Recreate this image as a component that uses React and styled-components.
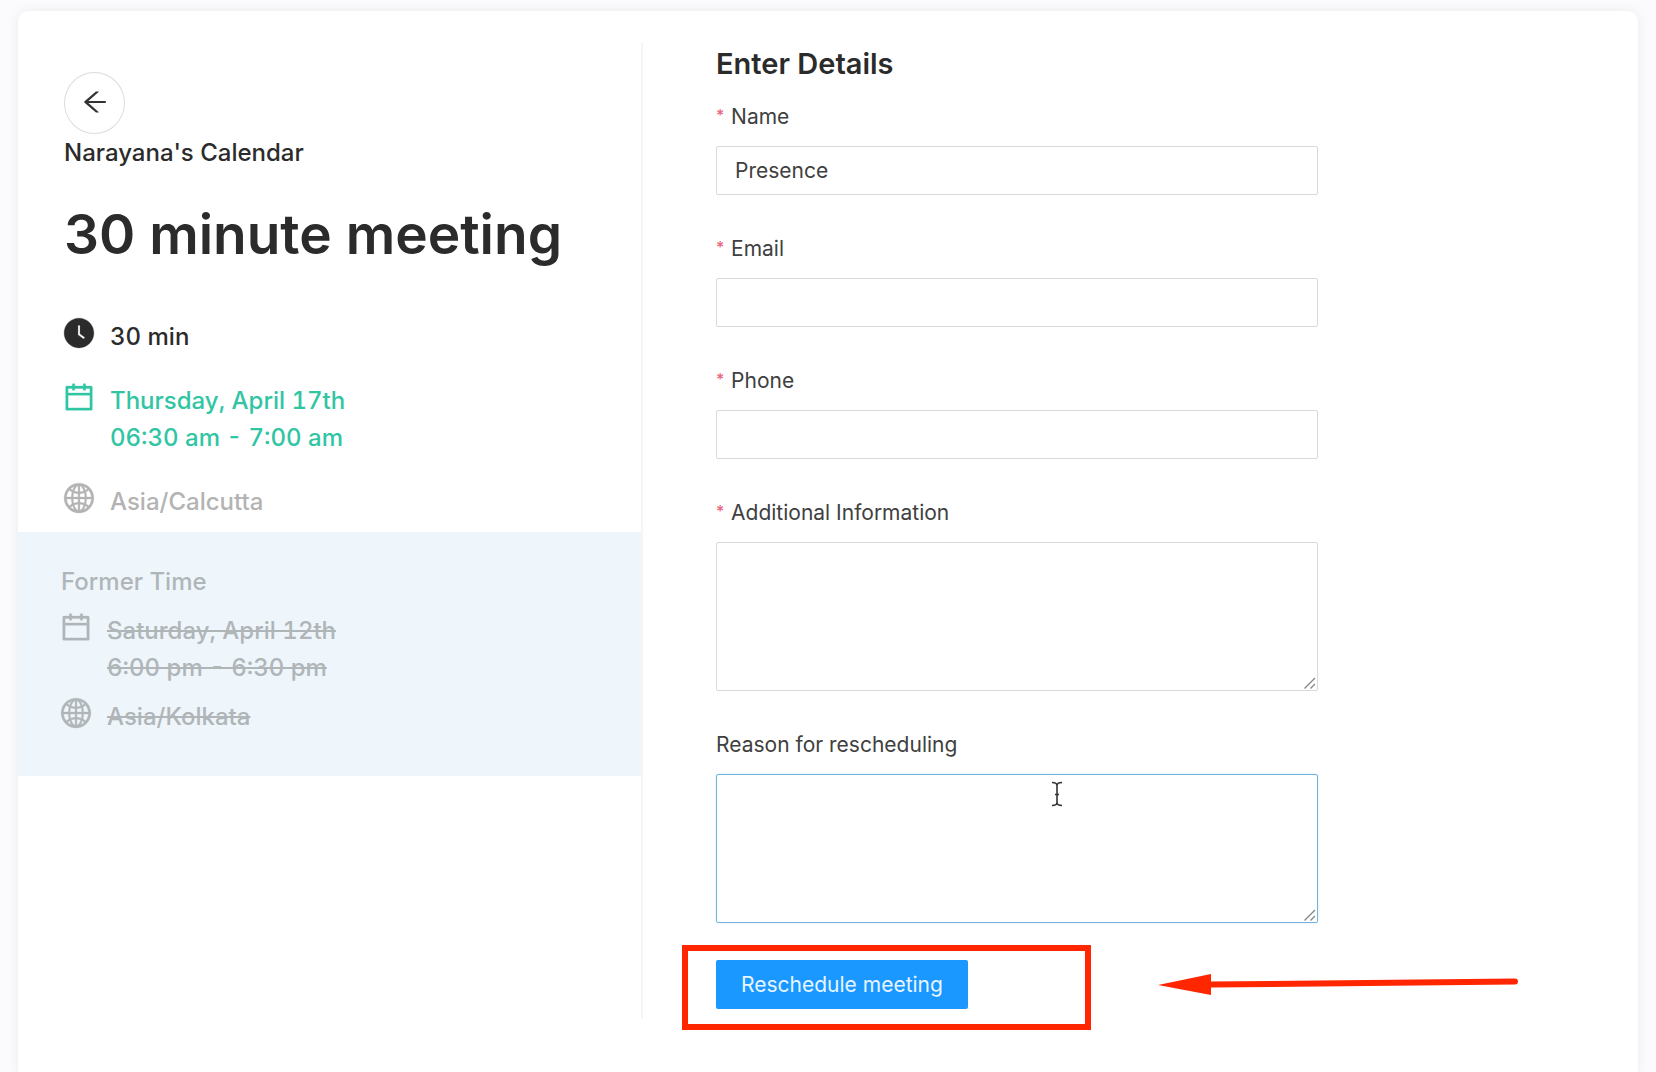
import React from "react";
import styled, { createGlobalStyle } from "styled-components";
import {
  AiFillClockCircle,
  AiOutlineArrowLeft,
  AiOutlineCalendar,
  AiOutlineGlobal,
} from "react-icons/ai";

const App = () => {
  const fields = [
    { id: "name", label: "Name", value: "Presence", required: true },
    { id: "email", label: "Email", type: "email", required: true },
    { id: "phone", label: "Phone", type: "tel", required: true },
    {
      id: "info",
      label: "Additional Information",
      multiline: true,
      required: true,
    },
    {
      id: "reason",
      label: "Reason for rescheduling",
      multiline: true,
      active: true,
    },
  ];

  return (
    <>
      <GlobalStyle />
      <Page>
        <Card>
          <Summary />
          <Details>
            <FormTitle>Enter Details</FormTitle>
            <Form onSubmit={(e) => e.preventDefault()}>
              {fields.map((field) => (
                <Field data={field} key={field.id} />
              ))}
              <Actions>
                <SubmitButton type="submit">Reschedule meeting</SubmitButton>
                <Highlight />
                <Pointer viewBox="0 0 362 24" aria-hidden="true">
                  <path d="M0 12 53 1v21z" fill="#ff2600" />
                  <path
                    d="M52 11.500 357 8.500"
                    stroke="#ff2600"
                    strokeWidth="6"
                    strokeLinecap="round"
                  />
                </Pointer>
              </Actions>
            </Form>
          </Details>
        </Card>
      </Page>
    </>
  );
};

const Summary = () => {
  return (
    <Sidebar>
      <Intro>
        <BackButton type="button" aria-label="Back">
          <AiOutlineArrowLeft />
        </BackButton>
        <Owner>Narayana's Calendar</Owner>
        <Title>30 minute meeting</Title>
        <InfoList $gap="27px">
          <Info icon={<AiFillClockCircle />} color="#2b2b2b">
            30 min
          </Info>
          <Info icon={<AiOutlineCalendar />} color="#30c5a3">
            Thursday, April 17th
            <br />
            06:30 am - 7:00 am
          </Info>
          <Info icon={<AiOutlineGlobal />} color="#b3b3b3">
            Asia/Calcutta
          </Info>
        </InfoList>
      </Intro>
      <Former>
        <FormerTitle>Former Time</FormerTitle>
        <InfoList $gap="12px">
          <Info icon={<AiOutlineCalendar />} color="#b0b5b8" struck>
            Saturday, April 12th
            <br />
            6:00 pm - 6:30 pm
          </Info>
          <Info icon={<AiOutlineGlobal />} color="#b0b5b8" struck>
            Asia/Kolkata
          </Info>
        </InfoList>
      </Former>
    </Sidebar>
  );
};

const Info = ({ icon, color, struck, children }) => {
  return (
    <InfoRow $color={color}>
      <InfoIcon>{icon}</InfoIcon>
      <InfoText $struck={struck}>{children}</InfoText>
    </InfoRow>
  );
};

const Field = ({ data }) => {
  return (
    <FieldGroup>
      <Label htmlFor={data.id}>
        {data.required && <Star>*</Star>}
        {data.label}
      </Label>
      {data.multiline ? (
        <AreaWrap>
          <TextArea id={data.id} $active={data.active} />
          <Grip viewBox="0 0 12 12" aria-hidden="true">
            <path d="M0.500 11.500 11 1M6.500 11.500 11 7" />
          </Grip>
          {data.active && (
            <TextCursor viewBox="0 0 12 26" aria-hidden="true">
              <path d="M1 1.500C4 1.500 6 2.500 6 4.500C6 2.500 8 1.500 11 1.500M6 4V22M1 24.500C4 24.500 6 23.500 6 21.500C6 23.500 8 24.500 11 24.500M4 13.500H8" />
            </TextCursor>
          )}
        </AreaWrap>
      ) : (
        <Input
          id={data.id}
          type={data.type || "text"}
          defaultValue={data.value}
        />
      )}
    </FieldGroup>
  );
};

const GlobalStyle = createGlobalStyle`
  * {
    box-sizing: border-box;
  }
  body {
    margin: 0;
    background: #fbfbfd;
    color: #2b2b2b;
    font-family: Inter, "Liberation Sans", sans-serif;
  }
`;

const Page = styled.main`
  display: flex;
  min-height: 100vh;
  padding: 11px 18px 0;
`;

const Card = styled.div`
  flex: 1;
  display: grid;
  grid-template-columns: 5fr 8fr;
  align-items: start;
  background: #ffffff;
  border-radius: 10px 10px 0 0;
  box-shadow: 0 0 12px rgba(0, 0, 0, 0.07);
`;

const Sidebar = styled.aside`
  padding-top: 61px;
`;

const Intro = styled.section`
  padding: 0 46px 12px;
`;

const BackButton = styled.button`
  display: flex;
  align-items: center;
  justify-content: center;
  width: 61px;
  height: 62px;
  padding: 0 0 2px;
  background: #ffffff;
  border: 1px solid #dcdcdc;
  border-radius: 50%;
  color: #333333;
  font-size: 30px;
  cursor: pointer;
`;

const Owner = styled.p`
  margin: 0;
  font-size: 24px;
  font-weight: 500;
  line-height: 37px;
`;

const Title = styled.h1`
  margin: 29px 0 50px;
  font-size: 55px;
  font-weight: 600;
  line-height: 68px;
`;

const InfoList = styled.div`
  display: flex;
  flex-direction: column;
  gap: ${(props) => props.$gap};
`;

const InfoRow = styled.div`
  display: flex;
  align-items: flex-start;
  gap: 16px;
  color: ${(props) => props.$color};
`;

const InfoIcon = styled.span`
  display: flex;
  flex: none;
  align-items: center;
  justify-content: center;
  width: 30px;
  height: 30px;

  svg {
    flex: none;
    width: 34px;
    height: 34px;
    stroke: currentColor;
    stroke-width: 10px;
  }
`;

const InfoText = styled.p`
  margin: 0;
  font-size: 24px;
  font-weight: 500;
  font-variant-numeric: tabular-nums;
  line-height: 37px;
  text-decoration: ${(props) => (props.$struck ? "line-through" : "none")};
`;

const Former = styled.section`
  padding: 31px 43px 41px;
  background: #eef5fb;
`;

const FormerTitle = styled.h2`
  margin: 0 0 12px;
  color: #b0b5b8;
  font-size: 24px;
  font-weight: 500;
  line-height: 37px;
`;

const Details = styled.section`
  margin-top: 32px;
  padding: 0 73px 10px;
  border-left: 2px solid #f5f5f5;
`;

const FormTitle = styled.h2`
  margin: 0 0 16px;
  font-size: 29px;
  font-weight: 600;
  line-height: 41px;
`;

const Form = styled.form`
  max-width: 602px;
`;

const FieldGroup = styled.div`
  margin-bottom: 37px;
`;

const Label = styled.label`
  display: flex;
  margin-bottom: 12px;
  color: #404040;
  font-size: 21px;
  line-height: 34px;
`;

const Star = styled.span`
  width: 15px;
  color: #e8637a;
  font-size: 16px;
  font-weight: 500;
  line-height: 31px;
`;

const Input = styled.input`
  display: block;
  width: 100%;
  height: 49px;
  padding: 0 18px;
  background: #ffffff;
  border: 1px solid #d9d9d9;
  border-radius: 2px;
  color: #404040;
  font-family: inherit;
  font-size: 21px;
  outline: none;
`;

const AreaWrap = styled.div`
  position: relative;
`;

const TextArea = styled.textarea`
  display: block;
  width: 100%;
  height: 149px;
  padding: 8px 18px;
  background: #ffffff;
  border: 1px solid ${(props) => (props.$active ? "#74b3dc" : "#d9d9d9")};
  border-radius: 2px;
  box-shadow: ${(props) => (props.$active ? "0 0 3px #d3ecfa" : "none")};
  color: #404040;
  font-family: inherit;
  font-size: 21px;
  outline: none;
  resize: none;
`;

const Grip = styled.svg`
  position: absolute;
  right: 2px;
  bottom: 2px;
  width: 12px;
  height: 12px;
  fill: none;
  stroke: #858585;
  stroke-width: 1.3px;
  pointer-events: none;
`;

const TextCursor = styled.svg`
  position: absolute;
  top: 7px;
  left: 335px;
  width: 12px;
  height: 26px;
  fill: none;
  stroke: #333333;
  stroke-width: 1.6px;
  pointer-events: none;
`;

const Actions = styled.div`
  position: relative;
`;

const SubmitButton = styled.button`
  height: 49px;
  padding: 0 25px;
  background: #1b98ff;
  border: none;
  border-radius: 2px;
  color: #e6f5ff;
  font-family: inherit;
  font-size: 21px;
  cursor: pointer;
`;

/* red frame drawn over the submit button */
const Highlight = styled.div`
  position: absolute;
  top: -15px;
  left: -34px;
  width: 409px;
  height: 85px;
  border: 6px solid #ff2600;
  pointer-events: none;
`;

const Pointer = styled.svg`
  position: absolute;
  top: 13px;
  left: 442px;
  width: 362px;
  height: 24px;
  fill: none;
  pointer-events: none;
`;

export default App;
